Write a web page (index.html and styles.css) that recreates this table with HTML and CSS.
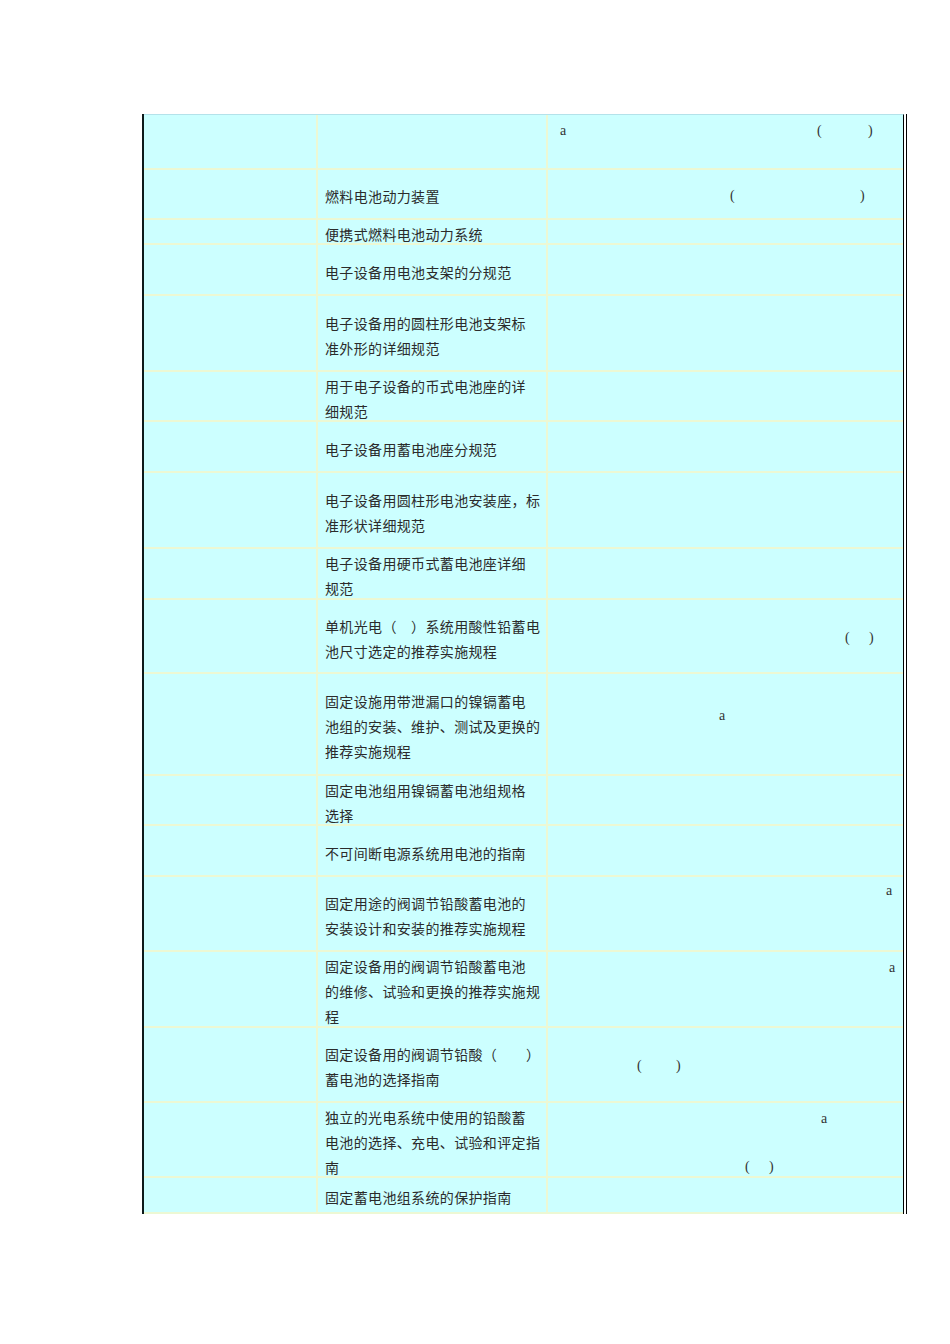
FILE: index.html
```html
<!DOCTYPE html>
<html lang="zh">
<head>
<meta charset="utf-8">
<title>电池标准</title>
<link rel="stylesheet" href="styles.css">
</head>
<body>
<div class="page">
  <div class="frame">
    <div class="sheet">
      <div class="c c1 r1"></div><div class="c c2"></div><div class="c c3 t3"><div class="fl"><span class="g m12">a</span><span class="g m257">(</span><span class="g m51">)</span></div></div>
      <div class="c c1 r2"></div><div class="c c2">燃料电池动力装置</div><div class="c c3 t13"><div class="fl"><span class="g m182">(</span><span class="g m130">)</span></div></div>
      <div class="c c1 r3"></div><div class="c c2">便携式燃料电池动力系统</div><div class="c c3"></div>
      <div class="c c1 r4"></div><div class="c c2">电子设备用电池支架的分规范</div><div class="c c3"></div>
      <div class="c c1 r5"></div><div class="c c2">电子设备用的圆柱形电池支架标<br>准外形的详细规范</div><div class="c c3"></div>
      <div class="c c1 r6"></div><div class="c c2">用于电子设备的币式电池座的详<br>细规范</div><div class="c c3"></div>
      <div class="c c1 r7"></div><div class="c c2">电子设备用蓄电池座分规范</div><div class="c c3"></div>
      <div class="c c1 r8"></div><div class="c c2">电子设备用圆柱形电池安装座，标<br>准形状详细规范</div><div class="c c3"></div>
      <div class="c c1 r9"></div><div class="c c2">电子设备用硬币式蓄电池座详细<br>规范</div><div class="c c3"></div>
      <div class="c c1 r10"></div><div class="c c2">单机光电（　）系统用酸性铅蓄电<br>池尺寸选定的推荐实施规程</div><div class="c c3 t25"><div class="fl"><span class="g m297">(</span><span class="g m24">)</span></div></div>
      <div class="c c1 r11"></div><div class="c c2">固定设施用带泄漏口的镍镉蓄电<br>池组的安装、维护、测试及更换的<br>推荐实施规程</div><div class="c c3 t29"><div class="fl"><span class="g m171">a</span></div></div>
      <div class="c c1 r12"></div><div class="c c2">固定电池组用镍镉蓄电池组规格<br>选择</div><div class="c c3"></div>
      <div class="c c1 r13"></div><div class="c c2">不可间断电源系统用电池的指南</div><div class="c c3"></div>
      <div class="c c1 r14"></div><div class="c c2">固定用途的阀调节铅酸蓄电池的<br>安装设计和安装的推荐实施规程</div><div class="c c3 t1"><div class="fl"><span class="g m338">a</span></div></div>
      <div class="c c1 r15"></div><div class="c c2">固定设备用的阀调节铅酸蓄电池<br>的维修、试验和更换的推荐实施规<br>程</div><div class="c c3 t3"><div class="fl"><span class="g m341">a</span></div></div>
      <div class="c c1 r16"></div><div class="c c2">固定设备用的阀调节铅酸（　　）<br>蓄电池的选择指南</div><div class="c c3 t25"><div class="fl"><span class="g m89">(</span><span class="g m39">)</span></div></div>
      <div class="c c1 r17"></div><div class="c c2">独立的光电系统中使用的铅酸蓄<br>电池的选择、充电、试验和评定指<br>南</div><div class="c c3 t3"><div class="fl"><span class="g m273">a</span></div><div class="fl next"><span class="g m197">(</span><span class="g m24">)</span></div></div>
      <div class="c c1 r18"></div><div class="c c2">固定蓄电池组系统的保护指南</div><div class="c c3"></div>
    </div>
  </div>
</div>
</body>
</html>
```

FILE: styles.css
```css
html, body {
  margin: 0;
  padding: 0;
  background: #ffffff;
}

body {
  width: 950px;
  height: 1344px;
  overflow: hidden;
  font-family: "Noto Sans CJK SC", "Liberation Serif", serif;
}

.page {
  padding-top: 114px;
  padding-left: 142px;
}

.frame {
  display: inline-block;
  border-left: 2px solid #0d1a1a;
  border-right: 1px solid #000000;
  padding-right: 2px;
  background: #ffffff;
}

.sheet {
  display: grid;
  grid-template-columns: 174px 230px 355px;
  grid-template-rows: 55px 50px 25px 51px 76px 50px 51px 76px 51px 74px 102px 50px 51px 75px 76px 75px 75px 36px;
  background: #ccffff;
  border-top: 1px solid #b4e2ea;
  border-right: 1px solid #000000;
}

.c {
  box-sizing: border-box;
  border-bottom: 2px solid #ecf8d4;
  border-right: 2px solid #ecf8d4;
}

.c3 {
  border-right: none;
}

.c2 {
  display: flex;
  align-items: center;
  padding: 5px 0 0 7px;
  font-size: 14px;
  letter-spacing: 0.35px;
  line-height: 25px;
  color: #2b2b2b;
  white-space: nowrap;
}

.c3 {
  font-family: "Liberation Serif", serif;
  font-size: 14px;
  line-height: 25px;
  color: #333333;
}

.fl {
  display: flex;
  white-space: nowrap;
  height: 25px;
}

.fl.next {
  margin-top: 23px;
}

.g {
  display: inline-block;
  width: 0;
  overflow: visible;
}

.t1 { padding-top: 1px; }
.t3 { padding-top: 3px; }
.t13 { padding-top: 13px; }
.t25 { padding-top: 25px; }
.t29 { padding-top: 29px; }

.m12 { margin-left: 12px; }
.m24 { margin-left: 24px; }
.m39 { margin-left: 39px; }
.m51 { margin-left: 51px; }
.m89 { margin-left: 89px; }
.m130 { margin-left: 130px; }
.m171 { margin-left: 171px; }
.m182 { margin-left: 182px; }
.m197 { margin-left: 197px; }
.m257 { margin-left: 257px; }
.m273 { margin-left: 273px; }
.m297 { margin-left: 297px; }
.m338 { margin-left: 338px; }
.m341 { margin-left: 341px; }
```
